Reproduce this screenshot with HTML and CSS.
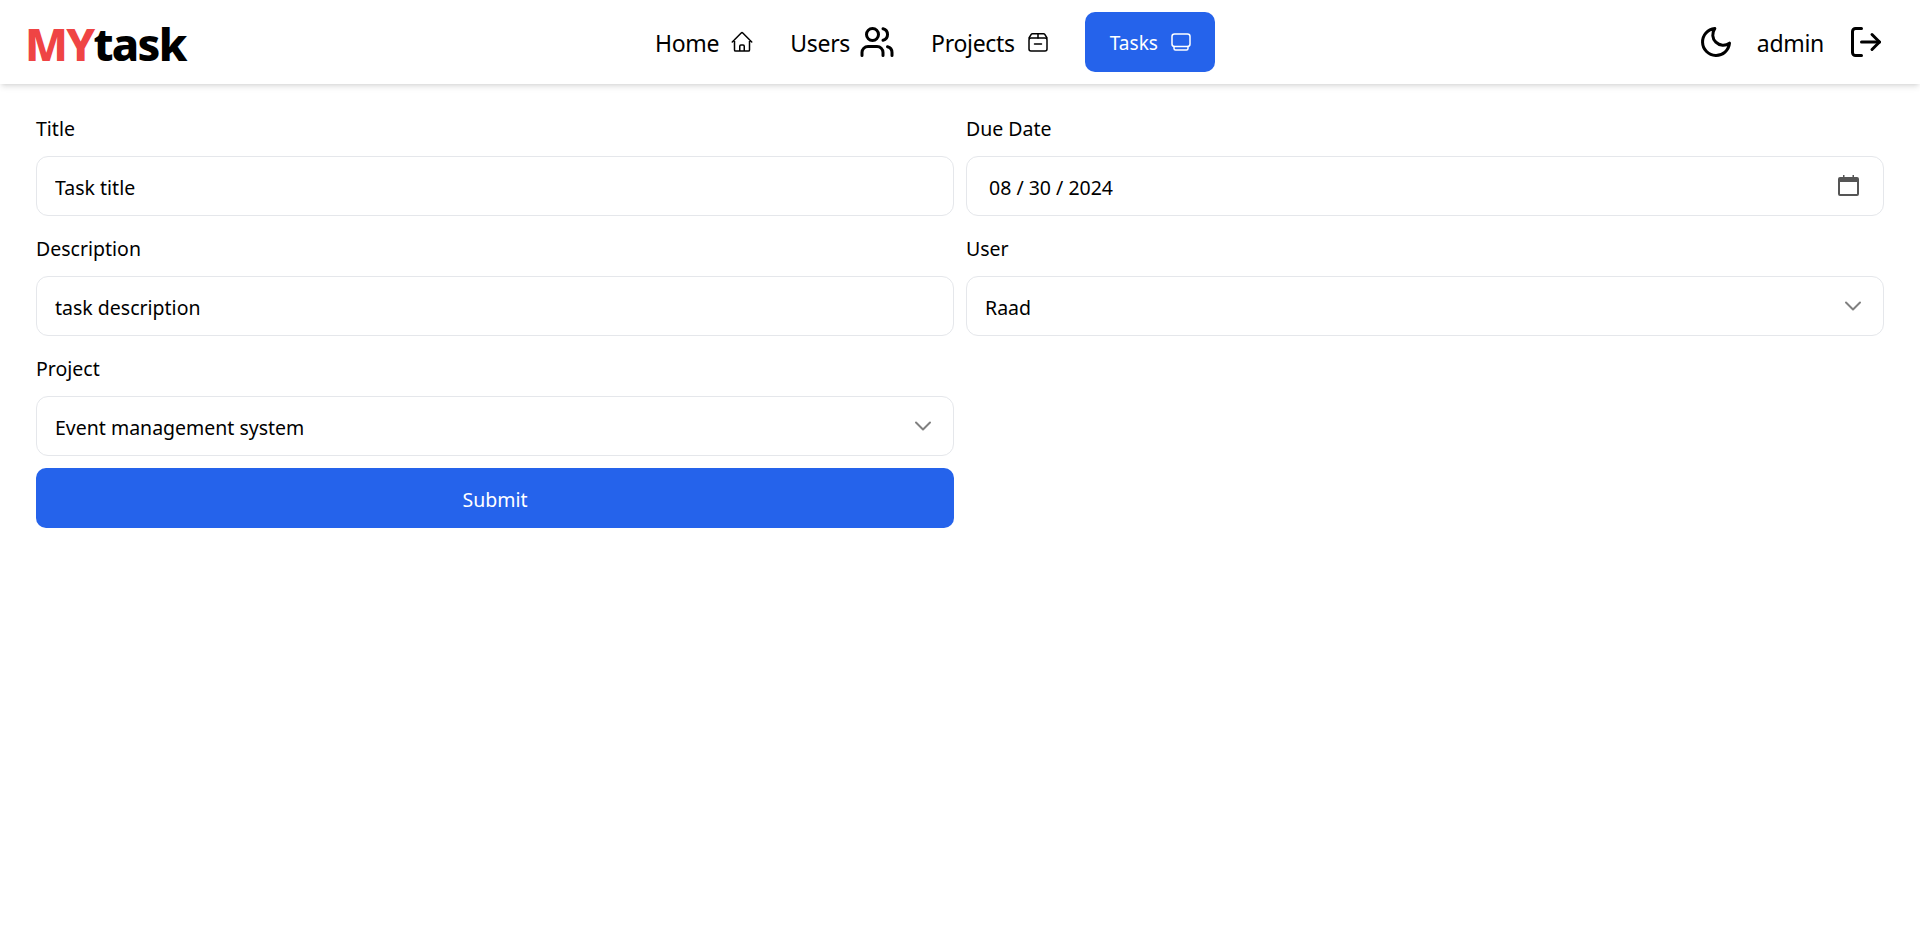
FILE: index.html
```html
<!DOCTYPE html>
<html lang="en">
<head>
    <meta charset="UTF-8">
    <meta name="viewport" content="width=device-width, initial-scale=1.0">
    <title>MYtask</title>
    <link rel="stylesheet" href="styles.css">
</head>
<body>
    <header class="navbar">
        <a class="logo" href="#"><span class="logo-red">MY</span>task</a>

        <nav class="nav-links">
            <a class="nav-link" href="#"><span class="nav-text">Home</span>
                <svg class="icon-sm" viewBox="0 0 24 24"><path d="m2.25 12 8.954-8.955c.44-.439 1.152-.439 1.591 0L21.75 12M4.5 9.75v10.125c0 .621.504 1.125 1.125 1.125H9.75v-4.875c0-.621.504-1.125 1.125-1.125h2.25c.621 0 1.125.504 1.125 1.125V21h4.125c.621 0 1.125-.504 1.125-1.125V9.75M8.25 21h8.25"/></svg>
            </a>
            <a class="nav-link" href="#"><span class="nav-text">Users</span>
                <svg class="icon-lg" viewBox="0 0 24 24"><path d="M16 21v-2a4 4 0 0 0-4-4H6a4 4 0 0 0-4 4v2"/><circle cx="9" cy="7" r="4"/><path d="M22 21v-2a4 4 0 0 0-3-3.87"/><path d="M16 3.13a4 4 0 0 1 0 7.75"/></svg>
            </a>
            <a class="nav-link" href="#"><span class="nav-text">Projects</span>
                <svg class="icon-sm" viewBox="0 0 24 24"><rect x="3" y="8" width="18" height="13" rx="2"/><path d="M3 8l2.200-3.600c.3-.5.7-.7 1.300-.7h11c.6 0 1 .2 1.300.7L21 8M12 3.700V8M8.500 14h7"/></svg>
            </a>
            <a class="nav-link active" href="#"><span class="nav-text">Tasks</span>
                <svg class="icon-sm" viewBox="0 0 24 24"><rect x="3" y="4" width="18" height="12.500" rx="2.500"/><path d="M5 16.500v2c0 1 .5 1.500 1.500 1.500h11c1 0 1.500-.5 1.500-1.500v-2"/></svg>
            </a>
        </nav>

        <div class="nav-right">
            <svg class="icon-lg" viewBox="0 0 24 24"><path d="M21 12.790A9 9 0 1 1 11.210 3 7 7 0 0 0 21 12.790z"/></svg>
            <span class="nav-text username">admin</span>
            <svg class="icon-lg" viewBox="0 0 24 24"><path d="M9 21H5a2 2 0 0 1-2-2V5a2 2 0 0 1 2-2h4"/><path d="M16 17l5-5-5-5"/><path d="M21 12H9"/></svg>
        </div>
    </header>

    <main class="page">
        <form class="task-form">
            <div class="form-group">
                <label for="title">Title</label>
                <input class="field" type="text" id="title" value="Task title">
            </div>
            <div class="form-group">
                <label for="dueDate">Due Date</label>
                <div class="field-wrap">
                    <input class="field field-date" type="text" id="dueDate" value="08 / 30 / 2024">
                    <svg class="field-icon" viewBox="0 0 21 21"><path fill-rule="evenodd" d="M5 0h1.500v2h8V0H16v2h3a2 2 0 0 1 2 2v15a2 2 0 0 1-2 2H2a2 2 0 0 1-2-2V4a2 2 0 0 1 2-2h3zM2 7v12h17V7z"/></svg>
                </div>
            </div>
            <div class="form-group">
                <label for="description">Description</label>
                <input class="field" type="text" id="description" value="task description">
            </div>
            <div class="form-group">
                <label for="user">User</label>
                <div class="field-wrap">
                    <select class="field" id="user">
                        <option>Raad</option>
                    </select>
                    <svg class="field-arrow" viewBox="0 0 24 24"><path d="M5 8.500l7 7 7-7"/></svg>
                </div>
            </div>
            <div class="form-group">
                <label for="project">Project</label>
                <div class="field-wrap">
                    <select class="field" id="project">
                        <option>Event management system</option>
                    </select>
                    <svg class="field-arrow" viewBox="0 0 24 24"><path d="M5 8.500l7 7 7-7"/></svg>
                </div>
            </div>
            <button class="submit-btn" type="submit">Submit</button>
        </form>
    </main>
</body>
</html>
```

FILE: styles.css
```css
* {
    margin: 0;
    padding: 0;
    box-sizing: border-box;
}

body {
    font-family: "Noto Sans", "Open Sans", sans-serif;
    background-color: white;
    color: #000;
    font-size: 20px;
}

.navbar {
    height: 84px;
    padding: 0 36px 0 25px;
    display: grid;
    grid-template-columns: 612px auto 1fr;
    align-items: center;
    background: white;
    box-shadow: 0 4px 6px -1px rgba(0,0,0,0.1), 0 2px 4px -2px rgba(0,0,0,0.1);
}

.logo {
    padding-top: 2px;
    font-size: 45px;
    font-weight: 800;
    letter-spacing: -1.7px;
    color: #000;
    text-decoration: none;
}

.logo-red {
    color: #ef4444;
}

.nav-links {
    display: flex;
    align-items: center;
}

.nav-link {
    display: flex;
    align-items: center;
    gap: 11px;
    height: 60px;
    padding: 0 18px;
    border-radius: 10px;
    font-size: 23px;
    letter-spacing: -0.3px;
    color: #000;
    text-decoration: none;
}

.nav-text {
    padding-top: 2px;
}

.nav-link.active {
    margin-left: 17px;
    padding: 0 22px 0 25px;
    background-color: #2563eb;
    color: white;
    font-size: 19px;
    letter-spacing: 0;
}

svg {
    fill: none;
    stroke: currentColor;
    stroke-width: 2;
    stroke-linecap: round;
    stroke-linejoin: round;
    flex-shrink: 0;
}

.icon-sm {
    width: 24px;
    height: 24px;
    stroke-width: 1.5;
}

.icon-lg {
    width: 36px;
    height: 36px;
}

.nav-link .icon-lg {
    margin-left: -2px;
}

.nav-right {
    display: flex;
    align-items: center;
    justify-content: flex-end;
    gap: 24px;
    font-size: 23px;
    letter-spacing: -0.3px;
}

.username {
    margin-left: -1px;
}

.page {
    padding: 24px 36px;
}

.task-form {
    display: grid;
    grid-template-columns: 1fr 1fr;
    gap: 12px;
}

.form-group label {
    display: block;
    height: 48px;
    line-height: 42px;
    font-size: 19.5px;
}

.field-wrap {
    position: relative;
}

.field {
    display: block;
    width: 100%;
    height: 60px;
    padding: 2px 18px 0;
    border: 1px solid #e5e7eb;
    border-radius: 12px;
    background: white;
    font-family: inherit;
    font-size: 19.5px;
    color: #000;
    appearance: none;
}

.field-date {
    padding-left: 22px;
}

.field-icon {
    position: absolute;
    top: 19px;
    right: 25px;
    width: 21px;
    height: 21px;
    fill: #555;
    stroke: none;
}

.field-arrow {
    position: absolute;
    top: 18px;
    right: 19px;
    width: 24px;
    height: 24px;
    stroke: #808080;
    stroke-width: 2;
    pointer-events: none;
}

.submit-btn {
    grid-column: 1;
    height: 60px;
    padding-top: 2px;
    border: none;
    border-radius: 10px;
    background-color: #2563eb;
    color: white;
    font-family: inherit;
    font-size: 19.5px;
    cursor: pointer;
}
```
